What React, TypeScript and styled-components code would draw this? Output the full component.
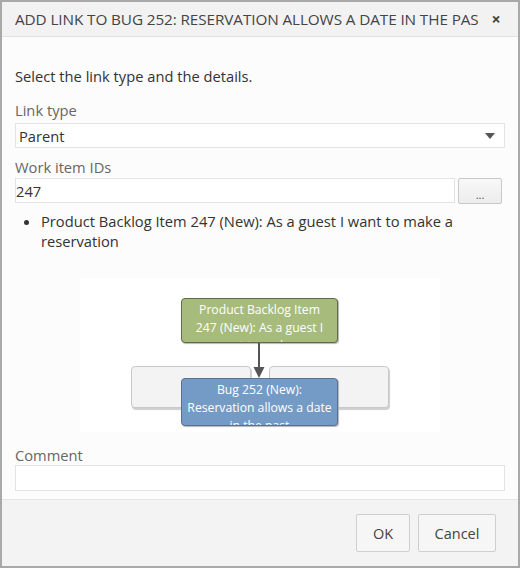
import React from "react";
import styled, { createGlobalStyle } from "styled-components";

const Global = createGlobalStyle`
  html, body { margin: 0; padding: 0; background: #fff; }
  body { font-family: "Open Sans", "Noto Sans", sans-serif; }
  * { box-sizing: border-box; }
`;

const Dialog = styled.div`
  width: 520px;
  height: 568px;
  border: 2px solid #a9a9a9;
  display: flex;
  flex-direction: column;
  background: #fcfcfc;
  color: #333;
`;

const TitleBar = styled.div`
  height: 35px;
  flex: none;
  display: flex;
  align-items: center;
  background: #f2f2f2;
  border-bottom: 1px solid #e2e2e2;
  padding-left: 13px;
`;

const Title = styled.div`
  width: 463px;
  overflow: hidden;
  white-space: nowrap;
  font-size: 15.3px;
  color: #444;
  letter-spacing: -0.1px;
`;

const Close = styled.div`
  flex: 1;
  text-align: center;
  font-size: 16px;
  font-weight: 700;
  color: #444;
  padding-right: 4px;
`;

const Body = styled.div`
  flex: 1;
  padding: 0 13px;
  font-size: 14.7px;
`;

const Intro = styled.div`
  margin-top: 29px;
  line-height: 20px;
  color: #333;
`;

const Label = styled.div<{ $top: number }>`
  margin-top: ${(p) => p.$top}px;
  line-height: 20px;
  color: #666;
`;

const Field = styled.div`
  height: 25px;
  border: 1px solid #e3e3e3;
  background: #fff;
  display: flex;
  align-items: center;
  padding-left: 3px;
  color: #333;
`;

const SelectField = styled(Field)`
  margin-top: 3px;
  justify-content: space-between;
  padding-right: 9px;
`;

const Caret = styled.div`
  width: 0;
  height: 0;
  border-left: 5px solid transparent;
  border-right: 5px solid transparent;
  border-top: 6px solid #555;
`;

const InputRow = styled.div`
  margin-top: 1px;
  display: flex;
  gap: 3px;
`;

const InputField = styled(Field)`
  flex: 1;
  padding-left: 0;
`;

const MoreButton = styled.div`
  width: 44px;
  height: 26px;
  border: 1px solid #c8c8c8;
  border-radius: 2px;
  background: linear-gradient(#f8f8f8, #ececec);
  display: flex;
  align-items: flex-end;
  justify-content: center;
  font-size: 11px;
  line-height: 16px;
  color: #555;
  margin-right: 3px;
`;

const List = styled.ul`
  margin: 7px 0 0 0;
  padding: 0 0 0 26px;
  line-height: 20px;
  color: #333;
  li { padding-right: 30px; }
`;

const Canvas = styled.div`
  position: relative;
  margin: 27px 0 0 65px;
  width: 360px;
  height: 154px;
  background: #fff;
  overflow: hidden;
`;

type Kind = "green" | "blue" | "ghost";

const Node = styled.div<{ $x: number; $y: number; $w: number; $h: number; $kind: Kind; $pad: number }>`
  position: absolute;
  left: ${(p) => p.$x}px;
  top: ${(p) => p.$y}px;
  width: ${(p) => p.$w}px;
  height: ${(p) => p.$h}px;
  border-radius: 4px;
  overflow: hidden;
  font-size: 12.2px;
  line-height: 18px;
  text-align: center;
  padding: 2px ${(p) => p.$pad}px 0;
  color: #fff;
  background: ${(p) => (p.$kind === "green" ? "#a7bc7c" : p.$kind === "blue" ? "#749bc6" : "#f3f3f3")};
  border: 1px solid ${(p) => (p.$kind === "green" ? "#5f6b4a" : p.$kind === "blue" ? "#5a7090" : "#c9c9c9")};
  box-shadow: ${(p) => (p.$kind === "ghost" ? "1px 2px 1px #cfcfcf" : "1px 1px 1px #b5b5b5")};
`;

const Arrow = styled.svg`
  position: absolute;
  left: 173px;
  top: 65px;
`;

const CommentField = styled(Field)`
  height: 26px;
`;

const Footer = styled.div`
  height: 67px;
  flex: none;
  margin-top: 7px;
  background: #f3f3f3;
  border-top: 1px solid #e6e6e6;
  display: flex;
  justify-content: flex-end;
  align-items: flex-start;
  padding: 14px 22px 0 0;
  gap: 8px;
`;

const Button = styled.div<{ $w: number }>`
  width: ${(p) => p.$w}px;
  height: 38px;
  border: 1px solid #cfcfcf;
  border-radius: 2px;
  background: #f6f6f6;
  display: flex;
  align-items: center;
  justify-content: center;
  font-size: 14.5px;
  color: #444;
`;

export default function App() {
  return (
    <>
      <Global />
      <Dialog>
        <TitleBar>
          <Title>ADD LINK TO BUG 252: RESERVATION ALLOWS A DATE IN THE PAST</Title>
          <Close>×</Close>
        </TitleBar>
        <Body>
          <Intro>Select the link type and the details.</Intro>
          <Label $top={14}>Link type</Label>
          <SelectField>
            <span>Parent</span>
            <Caret />
          </SelectField>
          <Label $top={9}>Work item IDs</Label>
          <InputRow>
            <InputField>247</InputField>
            <MoreButton>...</MoreButton>
          </InputRow>
          <List>
            <li>Product Backlog Item 247 (New): As a guest I want to make a reservation</li>
          </List>
          <Canvas>
            <Node $kind="ghost" $pad={0} $x={51} $y={88} $w={120} $h={42} />
            <Node $kind="ghost" $pad={0} $x={189} $y={88} $w={120} $h={42} />
            <Node $kind="green" $pad={8} $x={101} $y={20} $w={157} $h={45}>
              Product Backlog Item 247 (New): As a guest I want to make a reservation
            </Node>
            <Node $kind="blue" $pad={4} $x={101} $y={100} $w={157} $h={48}>
              Bug 252 (New):
              <br />
              Reservation allows a date in the past
            </Node>
            <Arrow width="12" height="36" viewBox="0 0 12 36">
              <line x1="6" y1="0" x2="6" y2="26" stroke="#555" strokeWidth="2" />
              <path d="M0.5 24 L11.5 24 L6 35 Z" fill="#555" />
            </Arrow>
          </Canvas>
          <Label $top={13}>Comment</Label>
          <CommentField />
        </Body>
        <Footer>
          <Button $w={54}>OK</Button>
          <Button $w={78}>Cancel</Button>
        </Footer>
      </Dialog>
    </>
  );
}
